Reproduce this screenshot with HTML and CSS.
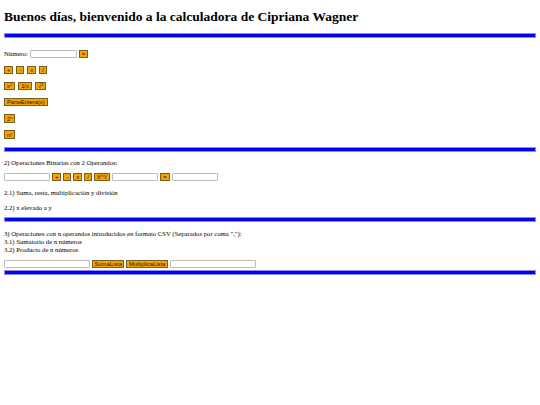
FILE: index.html
```html
<!DOCTYPE html>
<html lang="es">
<head>
<meta charset="utf-8">
<title>Calculadora</title>
<link rel="stylesheet" href="styles.css">
</head>
<body>
<div class="page">
  <h1 class="title">Buenos días, bienvenido a la calculadora de Cipriana Wagner</h1>
  <hr class="bar bar-1">

  <div class="row row-num">
    <span class="label">Número:</span>
    <input class="field field-sm" type="text">
    <button class="btn">=</button>
  </div>
  <div class="row">
    <button class="btn">+</button>
    <button class="btn">-</button>
    <button class="btn">x</button>
    <button class="btn">/</button>
  </div>
  <div class="row">
    <button class="btn">x<sup>2</sup></button>
    <button class="btn">1/x</button>
    <button class="btn">√<sup>2</sup></button>
  </div>
  <div class="row">
    <button class="btn">ParteEntera(x)</button>
  </div>
  <div class="row row-tall">
    <button class="btn btn-tall">2<sup>n</sup></button>
  </div>
  <div class="row row-tall row-last">
    <button class="btn btn-tall">n!</button>
  </div>

  <hr class="bar bar-2">

  <p class="text text-s2">2) Operaciones Binarias con 2 Operandos:</p>
  <div class="row row-bin">
    <input class="field field-md" type="text">
    <button class="btn">+</button>
    <button class="btn">-</button>
    <button class="btn">x</button>
    <button class="btn">/</button>
    <button class="btn">X^Y</button>
    <input class="field field-md" type="text">
    <button class="btn">=</button>
    <input class="field field-md" type="text">
  </div>
  <p class="text text-21">2.1) Suma, resta, multiplicación y división</p>
  <p class="text text-22">2.2) x elevado a y</p>

  <hr class="bar bar-3">

  <div class="text-block">
    <p class="text">3) Operaciones con n operandos introducidos en formato CSV (Separados por coma ","):</p>
    <p class="text">3.1) Sumatorio de n números</p>
    <p class="text">3.2) Producto de n números</p>
  </div>
  <div class="row row-list">
    <input class="field field-lg" type="text">
    <button class="btn btn-list">SumaLista</button>
    <button class="btn btn-list">MultiplicaLista</button>
    <input class="field field-lg" type="text">
  </div>

  <hr class="bar bar-4">
</div>
</body>
</html>
```

FILE: styles.css
```css
html, body {
  margin: 0;
  padding: 0;
  background: #ffffff;
}

body {
  font-family: "Liberation Serif", "Times New Roman", serif;
  font-size: 6.7px;
  color: #000000;
}

.page {
  padding: 9px 4px 0 4px;
}

.title {
  margin: 0;
  font-family: "Liberation Serif", "Times New Roman", serif;
  font-weight: bold;
  font-size: 13.5px;
  line-height: 15px;
}

.bar {
  box-sizing: border-box;
  height: 5px;
  margin: 0;
  border: 1px solid #8c8cf4;
  background: #0000f0;
}

.bar-1 { margin-top: 9px; }
.bar-2 { margin-top: 8px; }
.bar-3 { margin-top: 5px; }
.bar-4 { margin-top: 2px; }

.row {
  display: flex;
  align-items: center;
  gap: 3px;
  height: 8px;
  margin-top: 8px;
}

.row-num {
  margin-top: 12px;
  gap: 2px;
}

.row-tall {
  height: 9px;
  margin-top: 8px;
}

.row-last {
  margin-top: 7px;
}

.label {
  line-height: 8px;
}

.field {
  box-sizing: border-box;
  height: 8px;
  margin: 0;
  padding: 0;
  border: 1px solid #bdbdbd;
  border-radius: 1px;
  background: #ffffff;
}

.field-sm { width: 47px; }
.field-md { width: 46px; }
.field-lg { width: 86px; }

.btn {
  box-sizing: border-box;
  height: 8px;
  margin: 0;
  padding: 0 2px;
  border: 1px solid #7a5e1c;
  border-radius: 0;
  background: #f5a300;
  color: #1a1200;
  font-family: "Liberation Sans", Arial, sans-serif;
  font-size: 5.8px;
  line-height: 6px;
}

.btn-list {
  padding: 0 1.5px;
}

.btn-tall {
  height: 9px;
}

.btn sup {
  font-size: 4px;
  line-height: 0;
  vertical-align: 2px;
}

.text {
  margin: 0;
  line-height: 8px;
}

.text-s2 { margin-top: 7px; }
.row-bin { margin-top: 6px; gap: 2px; }
.text-21 { margin-top: 8px; }
.text-22 { margin-top: 7px; }

.text-block {
  margin-top: 8px;
}

.row-list {
  margin-top: 6px;
  gap: 2px;
}
```
